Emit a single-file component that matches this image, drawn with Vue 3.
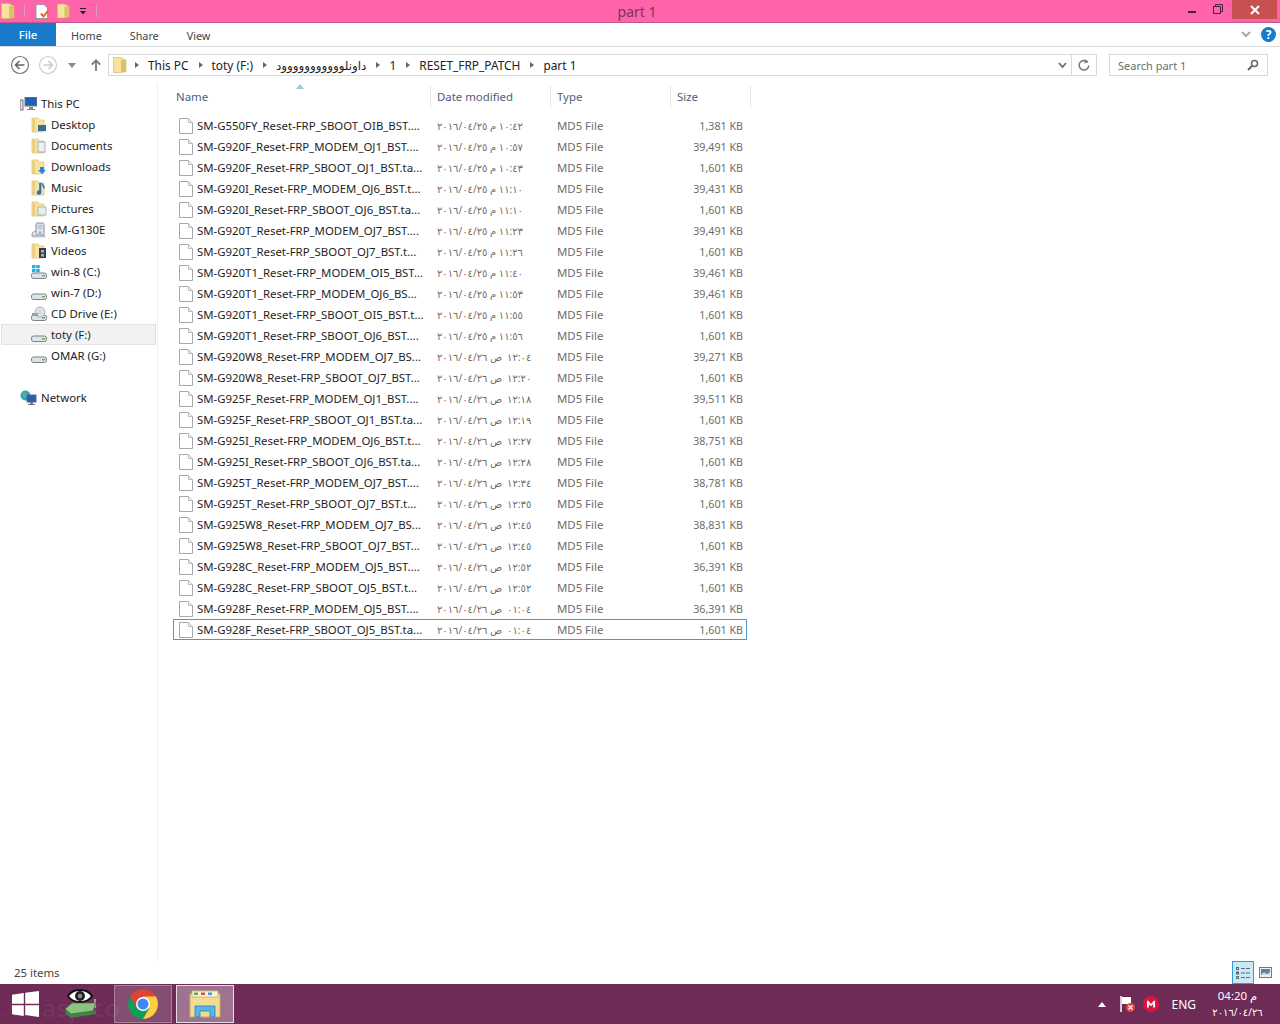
<script setup>
const navTop = [
  { label: 'Desktop', icon: 'desktop' },
  { label: 'Documents', icon: 'documents' },
  { label: 'Downloads', icon: 'downloads' },
  { label: 'Music', icon: 'music' },
  { label: 'Pictures', icon: 'pictures' },
  { label: 'SM-G130E', icon: 'phone' },
  { label: 'Videos', icon: 'videos' },
  { label: 'win-8 (C:)', icon: 'win' },
  { label: 'win-7 (D:)', icon: 'drive' },
  { label: 'CD Drive (E:)', icon: 'cd' },
  { label: 'toty (F:)', icon: 'drive', active: true },
  { label: 'OMAR (G:)', icon: 'drive' }
]

const crumbs = ['This PC', 'toty (F:)', 'داونلووووووووووود', '1', 'RESET_FRP_PATCH']

const files = [
  ['SM-G550FY_Reset-FRP_SBOOT_OIB_BST....', '٢٠١٦/٠٤/٢٥ م ١٠:٤٢', '1,381 KB'],
  ['SM-G920F_Reset-FRP_MODEM_OJ1_BST....', '٢٠١٦/٠٤/٢٥ م ١٠:٥٧', '39,491 KB'],
  ['SM-G920F_Reset-FRP_SBOOT_OJ1_BST.ta...', '٢٠١٦/٠٤/٢٥ م ١٠:٤٣', '1,601 KB'],
  ['SM-G920I_Reset-FRP_MODEM_OJ6_BST.t...', '٢٠١٦/٠٤/٢٥ م ١١:١٠', '39,431 KB'],
  ['SM-G920I_Reset-FRP_SBOOT_OJ6_BST.ta...', '٢٠١٦/٠٤/٢٥ م ١١:١٠', '1,601 KB'],
  ['SM-G920T_Reset-FRP_MODEM_OJ7_BST....', '٢٠١٦/٠٤/٢٥ م ١١:٢٣', '39,491 KB'],
  ['SM-G920T_Reset-FRP_SBOOT_OJ7_BST.t...', '٢٠١٦/٠٤/٢٥ م ١١:٢٦', '1,601 KB'],
  ['SM-G920T1_Reset-FRP_MODEM_OI5_BST...', '٢٠١٦/٠٤/٢٥ م ١١:٤٠', '39,461 KB'],
  ['SM-G920T1_Reset-FRP_MODEM_OJ6_BS...', '٢٠١٦/٠٤/٢٥ م ١١:٥٣', '39,461 KB'],
  ['SM-G920T1_Reset-FRP_SBOOT_OI5_BST.t...', '٢٠١٦/٠٤/٢٥ م ١١:٥٥', '1,601 KB'],
  ['SM-G920T1_Reset-FRP_SBOOT_OJ6_BST....', '٢٠١٦/٠٤/٢٥ م ١١:٥٦', '1,601 KB'],
  ['SM-G920W8_Reset-FRP_MODEM_OJ7_BS...', '٢٠١٦/٠٤/٢٦ ص ١٢:٠٤', '39,271 KB'],
  ['SM-G920W8_Reset-FRP_SBOOT_OJ7_BST...', '٢٠١٦/٠٤/٢٦ ص ١٢:٢٠', '1,601 KB'],
  ['SM-G925F_Reset-FRP_MODEM_OJ1_BST....', '٢٠١٦/٠٤/٢٦ ص ١٢:١٨', '39,511 KB'],
  ['SM-G925F_Reset-FRP_SBOOT_OJ1_BST.ta...', '٢٠١٦/٠٤/٢٦ ص ١٢:١٩', '1,601 KB'],
  ['SM-G925I_Reset-FRP_MODEM_OJ6_BST.t...', '٢٠١٦/٠٤/٢٦ ص ١٢:٢٧', '38,751 KB'],
  ['SM-G925I_Reset-FRP_SBOOT_OJ6_BST.ta...', '٢٠١٦/٠٤/٢٦ ص ١٢:٢٨', '1,601 KB'],
  ['SM-G925T_Reset-FRP_MODEM_OJ7_BST....', '٢٠١٦/٠٤/٢٦ ص ١٢:٣٤', '38,781 KB'],
  ['SM-G925T_Reset-FRP_SBOOT_OJ7_BST.t...', '٢٠١٦/٠٤/٢٦ ص ١٢:٣٥', '1,601 KB'],
  ['SM-G925W8_Reset-FRP_MODEM_OJ7_BS...', '٢٠١٦/٠٤/٢٦ ص ١٢:٤٥', '38,831 KB'],
  ['SM-G925W8_Reset-FRP_SBOOT_OJ7_BST...', '٢٠١٦/٠٤/٢٦ ص ١٢:٤٥', '1,601 KB'],
  ['SM-G928C_Reset-FRP_MODEM_OJ5_BST....', '٢٠١٦/٠٤/٢٦ ص ١٢:٥٢', '36,391 KB'],
  ['SM-G928C_Reset-FRP_SBOOT_OJ5_BST.t...', '٢٠١٦/٠٤/٢٦ ص ١٢:٥٢', '1,601 KB'],
  ['SM-G928F_Reset-FRP_MODEM_OJ5_BST....', '٢٠١٦/٠٤/٢٦ ص ٠١:٠٤', '36,391 KB'],
  ['SM-G928F_Reset-FRP_SBOOT_OJ5_BST.ta...', '٢٠١٦/٠٤/٢٦ ص ٠١:٠٤', '1,601 KB']
]

const dateText = (d) => d.replace('ص ', 'ص\u2002')
</script>

<template>
  <div class="window">
    <div class="titlebar">
      <div class="qat">
        <svg class="qat-folder" width="14" height="16" viewBox="0 0 14 16"><path d="M.5.500h7l5.500 2.500v11.500l-5.500 1H.5z" fill="#f7e39a" stroke="#d2b765" stroke-width=".7"/><path d="M8 3l5 0v11.500l-5 1z" fill="#dcc06a"/></svg>
        <i class="qat-sep first"></i>
        <svg class="qat-doc" width="14" height="15" viewBox="0 0 14 15"><path d="M1 .5h8l3.500 3.500v10.500H1z" fill="#fff" stroke="#999"/><path d="M6 9.500l2.500 3L13.500 6" fill="none" stroke="#e0662a" stroke-width="2"/></svg>
        <svg class="qat-folder2" width="13" height="16" viewBox="0 0 14 16"><path d="M.5.500h7l5.500 2.500v11.500l-5.500 1H.5z" fill="#f7e39a" stroke="#d2b765" stroke-width=".7"/><path d="M8 3l5 0v11.500l-5 1z" fill="#dcc06a"/></svg>
        <svg class="qat-drop" width="8" height="8" viewBox="0 0 8 8"><path d="M1 1h6v1H1zM1 4h6L4 7.500z" fill="#222"/></svg>
        <i class="qat-sep"></i>
      </div>
      <div class="title">part 1</div>
      <div class="caption">
        <span class="cap-min"></span>
        <svg class="cap-max" width="10" height="10" viewBox="0 0 10 10"><path d="M.5 2.500h7v7h-7zM2.500 2.500v-2h7v7h-2" fill="none" stroke="#4a1f38" stroke-width="1"/></svg>
        <span class="cap-close">
          <svg width="10" height="10" viewBox="0 0 10 10"><path d="M1 1l8 8M9 1l-8 8" stroke="#fff" stroke-width="2"/></svg>
        </span>
      </div>
    </div>

    <div class="ribbon">
      <div class="tab-file">File</div>
      <div class="tab">Home</div>
      <div class="tab">Share</div>
      <div class="tab">View</div>
      <div class="ribbon-right">
        <svg width="10" height="7" viewBox="0 0 10 7"><path d="M1 1l4 4 4-4" fill="none" stroke="#a8a8a8" stroke-width="2"/></svg>
        <span class="help">?</span>
      </div>
    </div>

    <div class="addressrow">
      <div class="navbtns">
        <svg width="20" height="20" viewBox="0 0 20 20"><circle cx="10" cy="10" r="8.500" fill="#fff" stroke="#777" stroke-width="1.200"/><path d="M14.500 10H6M9.500 6l-4 4 4 4" fill="none" stroke="#666" stroke-width="1.600"/></svg>
        <svg class="nav-fwd" width="20" height="20" viewBox="0 0 20 20"><circle cx="10" cy="10" r="8.500" fill="#fff" stroke="#ccc" stroke-width="1.200"/><path d="M5.500 10H14M10.500 6l4 4-4 4" fill="none" stroke="#ccc" stroke-width="1.600"/></svg>
        <svg class="nav-drop" width="8" height="5" viewBox="0 0 8 5"><path d="M0 0h8L4 5z" fill="#8a8a8a"/></svg>
        <svg class="nav-up" width="10" height="12" viewBox="0 0 10 12"><path d="M5 12V2M.7 5.700L5 1.300l4.300 4.400" fill="none" stroke="#777" stroke-width="1.800"/></svg>
      </div>
      <div class="addressbar">
        <svg class="addr-folder" width="14" height="16" viewBox="0 0 14 16"><path d="M.5.500h7l5.500 2.500v11.500l-5.500 1H.5z" fill="#f7e39a" stroke="#d2b765" stroke-width=".7"/><path d="M8 3l5 0v11.500l-5 1z" fill="#dcc06a"/></svg>
        <template v-for="c in crumbs" :key="c">
          <i class="crumb-arrow"></i>
          <span class="crumb">{{ c }}</span>
        </template>
        <i class="crumb-arrow"></i>
        <span class="crumb">part 1</span>
        <span class="addr-spacer"></span>
        <svg class="addr-chevron" width="9" height="7" viewBox="0 0 9 7"><path d="M1 1l3.500 4L8 1" fill="none" stroke="#666" stroke-width="1.600"/></svg>
        <span class="addr-refresh">
          <svg width="12" height="12" viewBox="0 0 12 12"><path d="M9.800 3.300A4.800 4.800 0 1 0 10.800 6.500" fill="none" stroke="#777" stroke-width="1.500"/><path d="M6.500 0v4.500L10.500 3z" fill="#777"/></svg>
        </span>
      </div>
      <div class="searchbox">
        <span>Search part 1</span>
        <svg width="12" height="12" viewBox="0 0 12 12"><circle cx="7.500" cy="4.500" r="3" fill="none" stroke="#666" stroke-width="1.500"/><path d="M5.200 6.800L1 11" stroke="#666" stroke-width="2"/></svg>
      </div>
    </div>

    <div class="main">
      <aside class="sidebar">
        <div class="nav-root">
          <svg width="17" height="14" viewBox="0 0 17 14"><rect x="5" y="0" width="12" height="9" fill="#1f5fb8" stroke="#777"/><rect x="0" y="3" width="3" height="10" fill="#ddd" stroke="#777"/><path d="M9 10h4v2h2v1H7v-1h2z" fill="#888"/></svg>
          <span>This PC</span>
        </div>
        <div v-for="n in navTop" :key="n.label" class="nav-item" :class="{ active: n.active }">
          <svg class="nav-ico" width="16" height="16" viewBox="0 0 16 16">
            <template v-if="['desktop','documents','downloads','music','pictures','videos'].includes(n.icon)">
              <path d="M1 1h6l1 2h5v12H1z" fill="#f6e3a1" stroke="#d9c078" stroke-width=".7"/>
              <rect x="1.500" y="2" width="2.500" height="12.500" fill="#e9cd7c"/>
              <rect v-if="n.icon === 'desktop'" x="7" y="8" width="8" height="6" fill="#3c6d96"/>
              <rect v-if="n.icon === 'documents'" x="7" y="4" width="7" height="10" fill="#eef1f4" stroke="#8a96a3" stroke-width=".7"/>
              <path v-if="n.icon === 'downloads'" d="M9 8h4v3h2l-4 4-4-4h2z" fill="#2b86d6"/>
              <path v-if="n.icon === 'music'" d="M10 3v9.500a2 2 0 1 1-1.500-1.900V3zM10 3c2 1 4 3 3 6" fill="#2f6fb5" stroke="#2f6fb5" stroke-width=".6"/>
              <rect v-if="n.icon === 'pictures'" x="7" y="6" width="8" height="8" fill="#e6eef2" stroke="#8fa4ad" stroke-width=".7"/>
              <g v-if="n.icon === 'videos'"><rect x="8" y="5" width="7" height="10" fill="#33414a"/><rect x="10" y="7" width="3" height="2.500" fill="#9fb5be"/><rect x="10" y="11" width="3" height="2.500" fill="#9fb5be"/></g>
            </template>
            <g v-else-if="n.icon === 'phone'">
              <rect x="5" y="1" width="8" height="12" rx="1.500" fill="#e8ecf0" stroke="#7e8a96"/>
              <rect x="6.500" y="2.500" width="5" height="5" fill="#b8cce0"/>
              <path d="M1 14c0-3 2-5 4-5" fill="none" stroke="#9aa4ad" stroke-width="1.200"/>
              <circle cx="9" cy="10.500" r="1.300" fill="#9aa4ad"/>
              <rect x="1" y="13" width="13" height="2" rx="1" fill="#c8ced4" stroke="#8a939b" stroke-width=".5"/>
            </g>
            <g v-else>
              <rect x="0.500" y="9" width="15" height="5.500" rx="2" fill="#dfe3e6" stroke="#7c8388"/>
              <rect x="11" y="11" width="3" height="1.500" fill="#6fa84f"/>
              <g v-if="n.icon === 'win'" fill="#1eb0e6"><rect x="1" y="1" width="3.500" height="3.200"/><rect x="5.200" y="1" width="3.500" height="3.200"/><rect x="1" y="5" width="3.500" height="3.200"/><rect x="5.200" y="5" width="3.500" height="3.200"/></g>
              <g v-if="n.icon === 'cd'"><circle cx="9" cy="6" r="5" fill="#dfe7ec" stroke="#8b959c" stroke-width=".7"/><circle cx="9" cy="6" r="1.300" fill="#fff" stroke="#8b959c" stroke-width=".5"/><rect x="1" y="7" width="6" height="3" fill="#9aa0a5"/></g>
            </g>
          </svg>
          <span>{{ n.label }}</span>
        </div>
        <div class="nav-root network">
          <svg width="17" height="16" viewBox="0 0 17 16"><circle cx="5.500" cy="5.500" r="5" fill="#2f9fd8"/><path d="M2 4c2-2 4-2 5 0s-2 3-3 4z" fill="#5cb85c"/><rect x="7" y="5" width="9" height="7" fill="#1f5fb8" stroke="#667"/><path d="M10 12h3v2h2v1H8v-1h2z" fill="#778"/></svg>
          <span>Network</span>
        </div>
      </aside>

      <section class="content">
        <div class="sort-arrow"><svg width="8" height="5" viewBox="0 0 8 5"><path d="M4 0l4 5H0z" fill="#a9c3d3"/></svg></div>
        <div class="columns">
          <div class="col col-name">Name</div>
          <div class="col col-date">Date modified</div>
          <div class="col col-type">Type</div>
          <div class="col col-size">Size</div>
        </div>
        <div class="rows">
          <div v-for="(f, i) in files" :key="f[0]" class="row" :class="{ focused: i === files.length - 1 }">
            <svg class="file-ico" width="14" height="16" viewBox="0 0 14 16"><path d="M.5.500h9l4 4v11H.5z" fill="#fff" stroke="#a8a8a8"/><path d="M9.500.500v4h4" fill="#f0f0f0" stroke="#bdbdbd"/></svg>
            <span class="cell-name">{{ f[0] }}</span>
            <span class="cell-date">{{ dateText(f[1]) }}</span>
            <span class="cell-type">MD5 File</span>
            <span class="cell-size">{{ f[2] }}</span>
          </div>
        </div>
      </section>
    </div>

    <div class="statusbar">
      <span class="status-count">25 items</span>
      <div class="view-btns">
        <span class="view-on">
          <svg width="16" height="14" viewBox="0 0 16 14"><g fill="none" stroke="#5a6d7a"><rect x="1.500" y="1.500" width="2" height="2"/><rect x="1.500" y="6" width="2" height="2"/><rect x="1.500" y="10.500" width="2" height="2"/></g><path d="M6 2.500h9M6 7h9M6 11.500h9" stroke="#5a6d7a" stroke-dasharray="4 1"/></svg>
        </span>
        <span class="view-off">
          <svg width="13" height="11" viewBox="0 0 13 11"><rect x=".5" y=".5" width="12" height="10" fill="#eef2f4" stroke="#6b7a85"/><rect x="2" y="2" width="9" height="6" fill="#4f86a8"/><path d="M2 8l3-3 3 2 3-2v3z" fill="#c9d8df"/></svg>
        </span>
      </div>
    </div>

    <footer class="taskbar">
      <span class="watermark">.visasp.co</span>
      <div class="start">
        <svg width="27" height="26" viewBox="0 0 27 26"><path d="M0 3.700L11.800 2v10.700H0zM13.200 1.800L27 0v12.700H13.200zM0 14.200h11.800V25L0 23.300zM13.200 14.200H27V26l-13.800-2z" fill="#fff"/></svg>
      </div>
      <div class="task-app">
        <svg width="34" height="32" viewBox="0 0 34 32">
          <path d="M4 8c5-8 19-8 24 0-5 8-19 8-24 0z" fill="#fff" stroke="#111" stroke-width="1.800"/>
          <circle cx="16" cy="8" r="5" fill="#222"/><circle cx="16" cy="8" r="2.200" fill="#8a8a8a"/>
          <path d="M31 11v9" stroke="#d5d5d5" stroke-width="1.200"/>
          <path d="M1 21l7-6h24l-3 8-22 3z" fill="#8cc47f" stroke="#3d6f43" stroke-width=".7"/>
          <path d="M2 22l5 4v4l-5-4zM7 26l25-3v3L7 30z" fill="#3f8448"/>
        </svg>
      </div>
      <div class="task-btn">
        <svg width="30" height="30" viewBox="0 0 30 30">
          <path d="M15 15L27.990 7.500A15 15 0 0 0 2.010 7.500L8.500 18.750z" fill="#db4437"/>
          <path d="M15 15l-6.500 3.750L2.010 7.500A15 15 0 0 0 15 30l6.500-11.250z" fill="#0f9d58"/>
          <path d="M15 15l6.500 3.750L15 30A15 15 0 0 0 27.990 7.500H15z" fill="#ffcd40"/>
          <circle cx="15" cy="15" r="7" fill="#fff"/><circle cx="15" cy="15" r="5.500" fill="#4285f4"/>
        </svg>
      </div>
      <div class="task-btn active">
        <svg width="32" height="28" viewBox="0 0 32 28">
          <path d="M1 4h30v23H1z" fill="#f2dc94" stroke="#c9ad62"/>
          <path d="M3 1h26v6H3z" fill="#fbf3d2" stroke="#cdbb80"/>
          <rect x="5" y="2.500" width="4" height="2.500" fill="#4caf50"/><rect x="12" y="2.500" width="4" height="2.500" fill="#d9534f"/><rect x="19" y="2.500" width="4" height="2.500" fill="#3d9be0"/>
          <path d="M6 16h20v11h-5v-6H11v6H6z" fill="#59b5e6" stroke="#2a7fb5" stroke-width=".8"/>
        </svg>
      </div>
      <div class="tray">
        <svg class="tray-up" width="8" height="5" viewBox="0 0 8 5"><path d="M4 0l4 5H0z" fill="#fff"/></svg>
        <svg class="tray-flag" width="15" height="17" viewBox="0 0 15 17"><path d="M1 0v16" stroke="#fff" stroke-width="1.500"/><path d="M2 1h9v7H2z" fill="#fff"/><circle cx="10.500" cy="11.500" r="4.500" fill="#e0483e"/><path d="M8.500 9.500l4 4M12.500 9.500l-4 4" stroke="#fff" stroke-width="1.200"/></svg>
        <svg class="tray-mega" width="16" height="16" viewBox="0 0 16 16"><circle cx="8" cy="8" r="8" fill="#d9153f"/><path d="M4 11.500V4.800h1.200L8 8l2.800-3.200H12v6.700h-1.800V8L8 10.300 5.800 8v3.500z" fill="#fff"/></svg>
        <span class="tray-lang">ENG</span>
        <div class="clock">
          <span class="clock-time">04:20 م</span>
          <span class="clock-date">٢٠١٦/٠٤/٢٦</span>
        </div>
      </div>
    </footer>
  </div>
</template>

<style scoped>
.window {
  width: 1280px;
  height: 1024px;
  display: flex;
  flex-direction: column;
  overflow: hidden;
  background: #fff;
  font-family: "Noto Sans", "DejaVu Sans", sans-serif;
  font-size: 11.4px;
  color: #1e1e1e;
}

/* title bar */
.titlebar {
  height: 23px;
  flex: none;
  display: flex;
  align-items: flex-start;
  background: #ff63a9;
  border-bottom: 1px solid #c2578c;
  box-sizing: border-box;
}
.qat {
  width: 100px;
  height: 22px;
  display: flex;
  align-items: center;
  padding-left: 1px;
  box-sizing: border-box;
}
.qat-sep {
  width: 1px;
  height: 12px;
  background: #d9a0b8;
  margin-left: 9px;
}
.qat-doc {
  margin-left: 10px;
}
.qat-folder2 {
  margin-left: 8px;
}
.qat-drop {
  margin-left: 9px;
}
.title {
  flex: 1;
  text-align: center;
  font-size: 14px;
  line-height: 24px;
  color: #7a3558;
  padding-right: 14px;
}
.caption {
  display: flex;
  align-items: flex-start;
  padding-right: 3px;
}
.cap-min {
  width: 8px;
  height: 2px;
  background: #4a1f38;
  margin: 11px 17px 0 0;
}
.cap-max {
  margin: 4px 9px 0 0;
}
.cap-close {
  width: 45px;
  height: 19px;
  background: #c75050;
  display: flex;
  align-items: center;
  justify-content: center;
}

/* ribbon tabs */
.ribbon {
  height: 24px;
  flex: none;
  display: flex;
  align-items: stretch;
  border-bottom: 1px solid #dadbdc;
  box-sizing: border-box;
  color: #444;
}
.tab-file {
  width: 56px;
  background: #1979ca;
  color: #fff;
  text-align: center;
  line-height: 23px;
  font-weight: 500;
}
.tab {
  font-size: 10.8px;
  line-height: 25px;
  margin-left: 15px;
  margin-right: 13px;
}
.ribbon-right {
  margin-left: auto;
  display: flex;
  align-items: center;
  gap: 10px;
  padding-right: 4px;
}
.help {
  width: 15px;
  height: 15px;
  border-radius: 50%;
  background: #1979ca;
  color: #fff;
  font-size: 12px;
  font-weight: 700;
  line-height: 15px;
  text-align: center;
}

/* address row */
.addressrow {
  height: 36px;
  flex: none;
  display: flex;
  align-items: center;
  padding: 0 12px 0 10px;
  box-sizing: border-box;
}
.navbtns {
  width: 98px;
  display: flex;
  align-items: center;
}
.nav-fwd {
  margin-left: 8px;
}
.nav-drop {
  margin-left: 10px;
}
.nav-up {
  margin-left: 15px;
}
.addressbar {
  width: 989px;
  height: 22px;
  display: flex;
  align-items: center;
  border: 1px solid #d9d9d9;
  box-sizing: border-box;
  color: #222;
}
.addr-folder {
  margin-left: 4px;
  margin-right: 8px;
}
.crumb-arrow {
  width: 0;
  height: 0;
  border-left: 4px solid #666;
  border-top: 3.5px solid transparent;
  border-bottom: 3.5px solid transparent;
  margin-right: 9px;
}
.crumb {
  font-size: 11.9px;
  margin-right: 10px;
  white-space: nowrap;
}
.addr-spacer {
  flex: 1;
}
.addr-chevron {
  margin-right: 4px;
}
.addr-refresh {
  width: 24px;
  height: 100%;
  border-left: 1px solid #d9d9d9;
  display: flex;
  align-items: center;
  justify-content: center;
}
.searchbox {
  width: 159px;
  height: 22px;
  margin-left: 12px;
  border: 1px solid #d9d9d9;
  box-sizing: border-box;
  display: flex;
  align-items: center;
  justify-content: space-between;
  padding: 0 8px;
  font-size: 11px;
  color: #6d6d6d;
}

/* body */
.main {
  flex: 1;
  min-height: 0;
  display: flex;
}
.sidebar {
  width: 158px;
  flex: none;
  box-sizing: border-box;
  border-right: 1px solid #f0f0f0;
  padding-top: 10px;
  color: #222;
}
.nav-root {
  height: 21px;
  display: flex;
  align-items: center;
  gap: 4px;
  padding-left: 20px;
}
.nav-root.network {
  margin-top: 21px;
}
.nav-item {
  height: 21px;
  width: 155px;
  margin-left: 1px;
  display: flex;
  align-items: center;
  gap: 4px;
  padding-left: 29px;
  box-sizing: border-box;
  border: 1px solid transparent;
}
.nav-item.active {
  background: #f2f2f2;
  border-color: #e2e2e2;
}
.nav-ico {
  flex: none;
}

.content {
  flex: 1;
  position: relative;
  padding: 3px 0 0 15px;
}
.sort-arrow {
  position: absolute;
  left: 138px;
  top: 1px;
  line-height: 0;
}
.columns {
  display: flex;
  height: 21px;
  color: #4c607a;
  line-height: 21px;
  margin-bottom: 8px;
}
.col {
  box-sizing: border-box;
  padding-left: 3px;
  border-right: 1px solid #e6e6e6;
}
.col-name { width: 258px; }
.col-date { width: 120px; padding-left: 6px; }
.col-type { width: 120px; padding-left: 6px; }
.col-size { width: 80px; padding-left: 6px; }

.row {
  height: 21px;
  width: 574px;
  display: flex;
  align-items: center;
  box-sizing: border-box;
  border: 1px solid transparent;
}
.row.focused {
  border-color: #4d9ac9;
}
.file-ico {
  margin-left: 5px;
  flex: none;
}
.cell-name {
  width: 240px;
  margin-left: 4px;
  white-space: nowrap;
  overflow: hidden;
  color: #1e1e1e;
}
.cell-date {
  width: 120px;
  font-size: 10px;
  color: #6d6d6d;
  direction: ltr;
  unicode-bidi: bidi-override;
  white-space: pre;
}
.cell-type {
  width: 100px;
  color: #6d6d6d;
}
.cell-size {
  width: 86px;
  font-size: 10.7px;
  text-align: right;
  color: #6d6d6d;
}

/* status bar */
.statusbar {
  height: 23px;
  flex: none;
  display: flex;
  align-items: center;
  justify-content: space-between;
  padding: 0 4px 0 14px;
  color: #444;
}
.status-count {
  margin-bottom: 1px;
}
.view-btns {
  display: flex;
  align-items: center;
}
.view-on {
  width: 22px;
  height: 23px;
  box-sizing: border-box;
  background: #cbe8f6;
  border: 1px solid #26a0da;
  display: flex;
  align-items: center;
  justify-content: center;
}
.view-off {
  width: 22px;
  height: 22px;
  display: flex;
  align-items: center;
  justify-content: center;
}

/* taskbar */
.taskbar {
  height: 40px;
  flex: none;
  position: relative;
  display: flex;
  align-items: center;
  background: #6e2b55;
  color: #fff;
}
.start {
  width: 50px;
  padding-left: 12px;
  box-sizing: border-box;
  display: flex;
  align-items: center;
  position: relative;
}
.task-app {
  width: 64px;
  padding-left: 14px;
  box-sizing: border-box;
  line-height: 0;
  position: relative;
}
.task-btn {
  width: 58px;
  height: 38px;
  margin-right: 4px;
  box-sizing: border-box;
  background: rgba(255, 255, 255, 0.16);
  border: 1px solid rgba(255, 255, 255, 0.3);
  display: flex;
  align-items: center;
  justify-content: center;
  position: relative;
}
.task-btn.active {
  background: rgba(255, 255, 255, 0.34);
  border-color: rgba(255, 255, 255, 0.75);
}
.watermark {
  position: absolute;
  left: 2px;
  top: 9px;
  font-size: 24px;
  line-height: 30px;
  letter-spacing: 1px;
  color: rgba(255, 255, 255, 0.07);
  pointer-events: none;
}
.tray {
  margin-left: auto;
  display: flex;
  align-items: center;
  padding-right: 17px;
}
.tray-up {
  margin-right: 14px;
}
.tray-flag {
  margin-right: 8px;
}
.tray-mega {
  margin-right: 12px;
}
.tray-lang {
  font-size: 12px;
  margin-right: 16px;
}
.clock {
  width: 51px;
  display: flex;
  flex-direction: column;
  align-items: center;
  line-height: 16px;
}
.clock-time,
.clock-date {
  direction: ltr;
  unicode-bidi: bidi-override;
  white-space: nowrap;
}
.clock-time {
  font-size: 11.5px;
}
.clock-date {
  font-size: 10px;
}
</style>
